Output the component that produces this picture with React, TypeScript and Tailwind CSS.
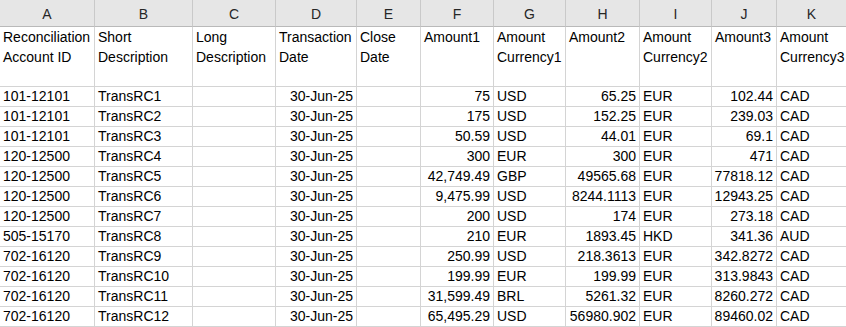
import React from "react";

const cols = ["A", "B", "C", "D", "E", "F", "G", "H", "I", "J", "K"];
const headers = [
  ["Reconciliation", "Account ID"],
  ["Short", "Description"],
  ["Long", "Description"],
  ["Transaction", "Date"],
  ["Close", "Date"],
  ["Amount1"],
  ["Amount", "Currency1"],
  ["Amount2"],
  ["Amount", "Currency2"],
  ["Amount3"],
  ["Amount", "Currency3"],
];

const rows: string[][] = [
  ["101-12101", "TransRC1", "", "30-Jun-25", "", "75", "USD", "65.25", "EUR", "102.44", "CAD"],
  ["101-12101", "TransRC2", "", "30-Jun-25", "", "175", "USD", "152.25", "EUR", "239.03", "CAD"],
  ["101-12101", "TransRC3", "", "30-Jun-25", "", "50.59", "USD", "44.01", "EUR", "69.1", "CAD"],
  ["120-12500", "TransRC4", "", "30-Jun-25", "", "300", "EUR", "300", "EUR", "471", "CAD"],
  ["120-12500", "TransRC5", "", "30-Jun-25", "", "42,749.49", "GBP", "49565.68", "EUR", "77818.12", "CAD"],
  ["120-12500", "TransRC6", "", "30-Jun-25", "", "9,475.99", "USD", "8244.1113", "EUR", "12943.25", "CAD"],
  ["120-12500", "TransRC7", "", "30-Jun-25", "", "200", "USD", "174", "EUR", "273.18", "CAD"],
  ["505-15170", "TransRC8", "", "30-Jun-25", "", "210", "EUR", "1893.45", "HKD", "341.36", "AUD"],
  ["702-16120", "TransRC9", "", "30-Jun-25", "", "250.99", "USD", "218.3613", "EUR", "342.8272", "CAD"],
  ["702-16120", "TransRC10", "", "30-Jun-25", "", "199.99", "EUR", "199.99", "EUR", "313.9843", "CAD"],
  ["702-16120", "TransRC11", "", "30-Jun-25", "", "31,599.49", "BRL", "5261.32", "EUR", "8260.272", "CAD"],
  ["702-16120", "TransRC12", "", "30-Jun-25", "", "65,495.29", "USD", "56980.902", "EUR", "89460.02", "CAD"],
];

const rightAligned = [3, 5, 7, 9];

export default function App() {
  return (
    <div
      className="w-[846px] h-[327px] overflow-hidden bg-white text-[14px] text-black"
      style={{ fontFamily: '"Liberation Sans", Arial, sans-serif' }}
    >
      <div className="grid w-[847px] grid-cols-[95px_98px_83px_81px_64px_73px_72px_74px_72px_65px_70px]">
        {cols.map((c) => (
          <div
            key={c}
            className="h-[27px] bg-[#e6e6e6] border-r border-b border-r-[#c9c9c9] border-b-[#b9b9b9] flex items-center justify-center text-[#262626] leading-none pt-[2px]"
          >
            {c}
          </div>
        ))}
        {headers.map((h, i) => (
          <div
            key={"h" + i}
            className="h-[60px] border-r border-b border-[#d4d4d4] pl-[3px] leading-[20px] whitespace-nowrap overflow-hidden"
          >
            {h.map((l, j) => (
              <div key={j}>{l}</div>
            ))}
          </div>
        ))}
        {rows.map((r, ri) =>
          r.map((v, ci) => (
            <div
              key={ri + "-" + ci}
              className={
                "h-[20px] border-r border-b border-[#d4d4d4] leading-[19px] whitespace-nowrap overflow-hidden " +
                (rightAligned.includes(ci) ? "text-right pr-[3px]" : "pl-[3px]")
              }
            >
              {v}
            </div>
          ))
        )}
      </div>
    </div>
  );
}
